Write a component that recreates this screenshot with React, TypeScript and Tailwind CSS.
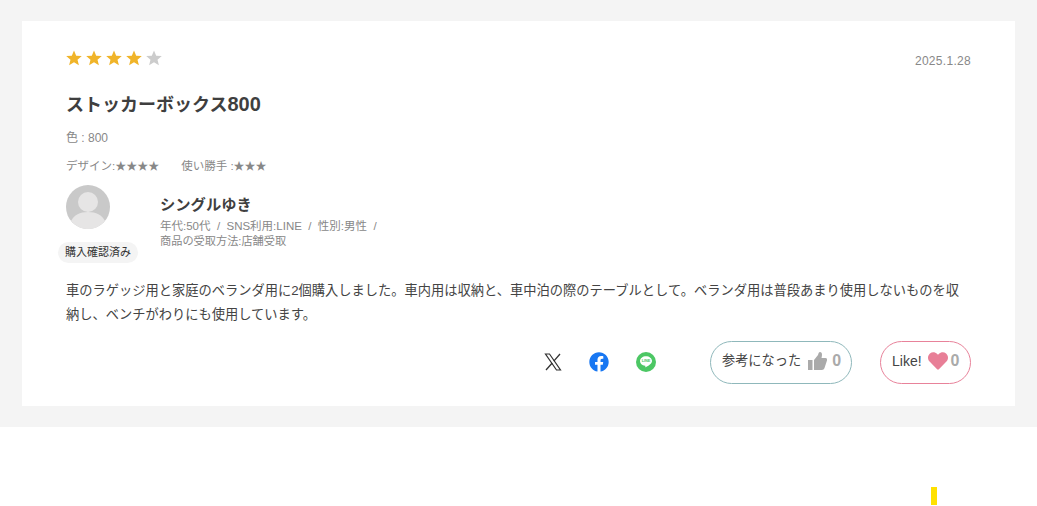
import { FaFacebook, FaHeart } from 'react-icons/fa'

const font = 'font-["Liberation_Sans","Noto_Sans_CJK_JP",sans-serif]'

function StarIcon({ on }: { on: boolean }) {
  return (
    <svg viewBox="0 0 16 16" className={`w-4 h-4 ${on ? 'text-[#f0b429]' : 'text-[#cccccc]'}`}>
      <polygon
        points="8,0.5 10.200,5.700 15.800,6.100 11.500,9.800 12.900,15.300 8,12.300 3.100,15.300 4.500,9.800 0.200,6.100 5.800,5.700"
        fill="currentColor"
      />
    </svg>
  )
}

function XIcon() {
  return (
    <svg viewBox="0 0 18 18" className="w-[18px] h-[18px] text-[#333333]" fill="none" stroke="currentColor">
      <polygon points="1.500,1 5.500,1 16.500,17 12.500,17" strokeWidth="1.200" />
      <path d="M16 1l-6.200 7.200M8.200 10L2 17" strokeWidth="1.300" />
    </svg>
  )
}

function LineIcon() {
  return (
    <svg viewBox="0 0 20 20" className="w-5 h-5">
      <circle cx="10" cy="10" r="10" fill="#4cc764" />
      <path
        d="M10 4.200c-3.300 0-6 2.100-6 4.800 0 2.400 2.100 4.400 5 4.800.5.100.4.400.3 1-.1.400.1.600.5.400 1-.5 4.100-2.400 5.200-3.700.7-.8 1-1.600 1-2.500 0-2.700-2.700-4.800-6-4.800z"
        fill="#fff"
      />
      <text x="10" y="10.400" textAnchor="middle" fontSize="3.800" fontWeight="700" fill="#4cc764">
        LINE
      </text>
    </svg>
  )
}

function ThumbIcon() {
  return (
    <svg viewBox="0 0 19 18" className="w-[19px] h-[18px] text-[#aaaaaa]" fill="currentColor">
      <rect x="0" y="8" width="4.500" height="10" />
      <path d="M6 8L10 3C10.500 1 11 0 12 0C14 0 14.500 2 13.500 6H17.500C19 6 19.500 7.500 18.800 9L16.500 16C16.200 17.300 15 18 14 18H6Z" />
    </svg>
  )
}

function Avatar() {
  return (
    <svg viewBox="0 0 44 44" className="w-11 h-11">
      <circle cx="22" cy="22" r="22" fill="#c9c9c9" />
      <circle cx="22" cy="17" r="10" fill="#e6e5e5" />
      <path d="M5 36c3-6 9-9 17-9s14 3 17 9a22 22 0 0 1-34 0z" fill="#e6e5e5" />
    </svg>
  )
}

export default function App() {
  return (
    <div className={`${font} bg-white h-[506px] overflow-hidden`}>
      <div className="bg-[#f4f4f4] px-[22px] pt-[21px] pb-[21px]">
        <div className="bg-white h-[385px] px-[44px] pt-[29px]">
          {/* Stars + date */}
          <div className="flex justify-between items-start h-[17px]">
            <div className="flex gap-[4px]">
              {[0, 1, 2, 3, 4].map((i) => (
                <StarIcon key={i} on={i < 4} />
              ))}
            </div>
            <span className="text-[12px] leading-[20px] tracking-[0.3px] text-[#888888] mt-[1px]">2025.1.28</span>
          </div>

          {/* Title */}
          <h3 className="mt-[24px] text-[18px] leading-[26px] font-bold text-[#3f3f3f]">
            ストッカーボックス<span className="text-[20px]">800</span>
          </h3>

          <p className="mt-[11px] text-[12px] leading-[18px] text-[#888888]">色 : 800</p>

          <div className="mt-[10px] flex gap-[22px] text-[11.5px] leading-[18px] text-[#888888]">
            <span>
              デザイン:<span className="text-[11px]">★★★★</span>
            </span>
            <span>
              使い勝手 :<span className="text-[11px]">★★★</span>
            </span>
          </div>

          {/* Reviewer */}
          <div className="mt-[10px] flex items-start">
            <div className="relative w-[94px] h-[78px]">
              <Avatar />
              <span className="absolute left-[-8px] top-[57px] h-[21px] px-[7px] rounded-full bg-[#f4f4f4] text-[11px] leading-[21px] text-[#333333] whitespace-nowrap">
                購入確認済み
              </span>
            </div>
            <div className="pt-[9px]">
              <p className="text-[15.3px] leading-[22px] font-bold text-[#3f3f3f]">シングルゆき</p>
              <p className="mt-[3px] text-[11.5px] leading-[15px] text-[#888888] whitespace-nowrap">
                年代:50代 &nbsp;/&nbsp; SNS利用:LINE &nbsp;/&nbsp; 性別:男性 &nbsp;/
              </p>
              <p className="text-[11.2px] leading-[15px] text-[#888888] whitespace-nowrap">商品の受取方法:店舗受取</p>
            </div>
          </div>

          {/* Body */}
          <p className="mt-[16px] text-[13.25px] leading-[24px] text-[#444444]">
            車のラゲッジ用と家庭のベランダ用に2個購入しました。車内用は収納と、車中泊の際のテーブルとして。ベランダ用は普段あまり使用しないものを収納し、ベンチがわりにも使用しています。
          </p>

          {/* Actions */}
          <div className="mt-[14px] flex items-center justify-end">
            <div className="flex items-center mb-[2px]">
              <XIcon />
              <FaFacebook className="w-5 h-5 text-[#1877f2] ml-[27px]" />
              <div className="ml-[27px]">
                <LineIcon />
              </div>
            </div>
            <div className="ml-[54px] h-[43px] w-[142px] rounded-full border border-[#8fb8bb] flex items-center pl-[11px] pb-[3px]">
              <span className="text-[13.2px] text-[#444444]">参考になった</span>
              <div className="ml-[7px]">
                <ThumbIcon />
              </div>
              <span className="ml-[5px] text-[16px] font-bold text-[#aaaaaa]">0</span>
            </div>
            <div className="ml-[28px] h-[43px] w-[91px] rounded-full border border-[#e8829a] flex items-center pl-[11px] pb-[3px]">
              <span className="text-[14px] text-[#444444]">Like!</span>
              <FaHeart className="w-5 h-5 text-[#e87f97] ml-[6px]" />
              <span className="ml-[3px] text-[16px] font-bold text-[#aaaaaa]">0</span>
            </div>
          </div>
        </div>
      </div>

      {/* Yellow marker */}
      <div className="flex justify-end pr-[100px] pt-[60px]">
        <div className="w-[6px] h-[18px] bg-[#ffe100]" />
      </div>
    </div>
  )
}
